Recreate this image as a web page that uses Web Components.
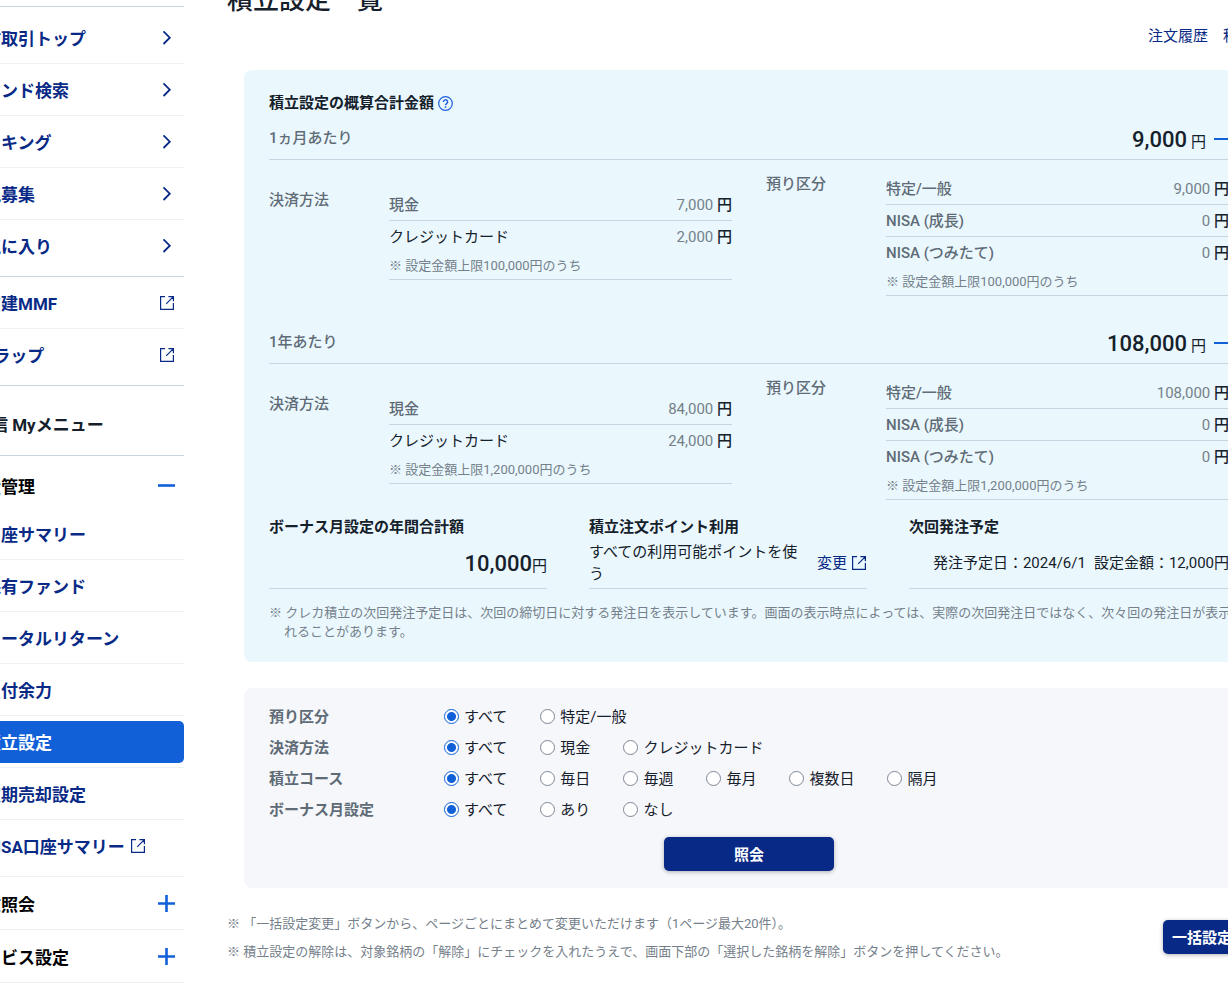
<!DOCTYPE html>
<html lang="ja">
<head>
<meta charset="utf-8">
<meta name="viewport" content="width=device-width, initial-scale=1">
<title>積立設定一覧</title>
<style>
    :root {
        --ink: #15202b;
        --muted: #5f6b76;
        --note: #75808a;
        --navy: #082a86;
        --blue: #1160d8;
        --line: #c9d4e2;
        --line-light: #edf2f7;
    }
    html {
        overflow: hidden;
    }
    body {
        margin: 0;
        background: #fff;
        color: var(--ink);
        font: 400 15px/22px Roboto, "Noto Sans CJK JP", sans-serif;
    }
</style>
</head>
<body>
<fund-app></fund-app>

<script>
const ICONS = {
    chevron: '<svg width="10" height="14" viewBox="0 0 10 14" fill="none" stroke="currentColor" stroke-width="1.8"><path d="M1.5 .4L7.8 6.7 1.5 13"/></svg>',
    external: '<svg width="16" height="16" viewBox="0 0 16 16" fill="none" stroke="currentColor" stroke-width="1.2"><path d="M6 1.6H1.6v12.8h12.8V8M9.4 1.6h5v4.6M14.4 1.6L7.2 8.8"/></svg>',
    minus: '<svg width="17" height="17" viewBox="0 0 17 17" fill="none" stroke="#1160d8" stroke-width="2.6"><path d="M0 8.5h17"/></svg>',
    plus: '<svg width="17" height="17" viewBox="0 0 17 17" fill="none" stroke="#1160d8" stroke-width="2.6"><path d="M0 8.5h17M8.5 0v17"/></svg>',
    help: '<svg width="15" height="15" viewBox="0 0 15 15" fill="none" stroke="#1f5fe0" stroke-width="1.2"><circle cx="7.5" cy="7.5" r="6.8"/><path d="M5.4 6a2.1 2.1 0 1 1 3.2 1.7c-.8.5-1.1.8-1.1 1.6" stroke-width="1.5"/><path d="M7.5 10.4v1.5" stroke-width="1.6"/></svg>'
};

class UiIcon extends HTMLElement {
    connectedCallback() {
        this.attachShadow({ mode: 'open' });
        this.shadowRoot.innerHTML = `
            <style>
                :host { display: inline-flex; flex: none; }
                svg { display: block; }
            </style>
            ${ICONS[this.getAttribute('name')]}
        `;
    }
}

// One row of the side menu
class MenuItem extends HTMLElement {
    connectedCallback() {
        const icon = this.getAttribute('icon');
        this.attachShadow({ mode: 'open' });
        this.shadowRoot.innerHTML = `
            <style>
                :host {
                    display: block;
                    border-bottom: 1px solid var(--line-light);
                    font-size: 17px;
                    font-weight: 700;
                }
                :host([last]) {
                    border-bottom: 0;
                }
                a {
                    display: flex;
                    align-items: center;
                    justify-content: space-between;
                    height: 51px;
                    padding: 0 9px 0 16px;
                    color: var(--navy);
                    text-decoration: none;
                }
                span {
                    padding-top: 2px;
                }
                :host([sub]) a {
                    justify-content: flex-start;
                    gap: 5px;
                    padding-left: 33px;
                }
                :host([active]) {
                    padding: 5px 0 4px;
                }
                :host([active]) a {
                    height: 42px;
                    border-radius: 5px;
                    background: var(--blue);
                    color: #fff;
                }
                .chevron {
                    margin-right: 3px;
                }
            </style>
            <a href="#">
                <span><slot></slot></span>
                ${icon ? `<ui-icon name="${icon}" class="${icon}"></ui-icon>` : ''}
            </a>
        `;
    }
}

// Heading that opens and closes a group of the menu
class MenuToggle extends HTMLElement {
    connectedCallback() {
        this.attachShadow({ mode: 'open' });
        this.shadowRoot.innerHTML = `
            <style>
                :host {
                    display: block;
                    border-bottom: 1px solid var(--line-light);
                }
                :host([open]) {
                    border-bottom: 0;
                }
                button {
                    display: flex;
                    align-items: center;
                    justify-content: space-between;
                    width: 100%;
                    height: 52px;
                    padding: 4px 9px 0 16px;
                    border: 0;
                    background: none;
                    color: #000;
                    font: inherit;
                    font-size: 17px;
                    font-weight: 700;
                }
                ui-icon {
                    padding-bottom: 4px;
                }
                :host([open]) button {
                    padding-top: 10px;
                }
            </style>
            <button type="button" aria-expanded="${this.hasAttribute('open')}">
                <slot></slot>
                <ui-icon name="${this.hasAttribute('open') ? 'minus' : 'plus'}"></ui-icon>
            </button>
        `;
    }
}

class SideMenu extends HTMLElement {
    connectedCallback() {
        this.attachShadow({ mode: 'open' });
        this.shadowRoot.innerHTML = `
            <style>
                :host { display: block; }
                .group {
                    border-bottom: 1px solid var(--line);
                    padding-bottom: 5px;
                }
                .first {
                    border-top: 1px solid var(--line);
                    padding-top: 5px;
                }
                .sub {
                    border-bottom-color: var(--line-light);
                }
                h2 {
                    margin: 0;
                    padding: 28px 0 18px 23px;
                    border-bottom: 1px solid var(--line);
                    font-size: 17px;
                    line-height: 23px;
                    font-weight: 700;
                }
            </style>
            <nav>
                <div class="group first">
                    <menu-item icon="chevron">投信取引トップ</menu-item>
                    <menu-item icon="chevron">ファンド検索</menu-item>
                    <menu-item icon="chevron">ランキング</menu-item>
                    <menu-item icon="chevron">新規募集</menu-item>
                    <menu-item icon="chevron" last>お気に入り</menu-item>
                </div>
                <div class="group">
                    <menu-item icon="external">外貨建MMF</menu-item>
                    <menu-item icon="external" last>SBIラップ</menu-item>
                </div>
                <h2>投信 Myメニュー</h2>
                <menu-toggle open>資産管理</menu-toggle>
                <div class="group sub">
                    <menu-item sub>口座サマリー</menu-item>
                    <menu-item sub>保有ファンド</menu-item>
                    <menu-item sub>トータルリターン</menu-item>
                    <menu-item sub>買付余力</menu-item>
                    <menu-item sub active>積立設定</menu-item>
                    <menu-item sub>定期売却設定</menu-item>
                    <menu-item sub icon="external" last>NISA口座サマリー</menu-item>
                </div>
                <menu-toggle>注文照会</menu-toggle>
                <menu-toggle>サービス設定</menu-toggle>
            </nav>
        `;
    }
}

// Table of amounts; rows are written as "label=amount" separated by "|"
class BreakdownTable extends HTMLElement {
    connectedCallback() {
        const rows = this.getAttribute('rows').split('|').map((row) => row.split('='));
        const plain = this.getAttribute('plain');
        this.attachShadow({ mode: 'open' });
        this.shadowRoot.innerHTML = `
            <style>
                :host {
                    display: grid;
                    grid-template-columns: 120px 1fr;
                    align-items: start;
                }
                h4 {
                    margin: 0;
                    color: var(--muted);
                    font-size: 15px;
                    font-weight: 500;
                }
                table {
                    width: 100%;
                    border-collapse: collapse;
                    border-bottom: 1px solid var(--line);
                }
                th, td {
                    height: 31px;
                    padding: 0;
                    text-align: right;
                    font-weight: 500;
                }
                th {
                    color: var(--muted);
                    text-align: left;
                }
                th.plain {
                    color: var(--ink);
                    font-weight: 400;
                }
                tr + tr:not(.limit) > * {
                    border-top: 1px solid var(--line);
                }
                td span {
                    color: var(--note);
                    font-weight: 400;
                }
                .limit td {
                    height: 27px;
                    color: var(--note);
                    font-size: 13px;
                    font-weight: 400;
                    line-height: 19px;
                    text-align: left;
                }
            </style>
            <h4>${this.getAttribute('heading')}</h4>
            <table>
                ${rows.map(([label, amount]) => `
                    <tr>
                        <th scope="row" class="${label === plain ? 'plain' : ''}">${label}</th>
                        <td><span>${amount}</span> 円</td>
                    </tr>`).join('')}
                <tr class="limit"><td colspan="2">※ ${this.getAttribute('limit')}</td></tr>
            </table>
        `;
    }
}

// Total for a period, with its breakdown tables in the slot
class PeriodTotal extends HTMLElement {
    connectedCallback() {
        this.attachShadow({ mode: 'open' });
        this.shadowRoot.innerHTML = `
            <style>
                :host {
                    display: block;
                    height: 204px;
                }
                header {
                    display: flex;
                    justify-content: space-between;
                    align-items: flex-start;
                    height: 32px;
                    border-bottom: 1px solid var(--line);
                }
                h3 {
                    margin: 0;
                    color: var(--muted);
                    font-size: 15px;
                    font-weight: 500;
                }
                .amount {
                    display: flex;
                    align-items: center;
                }
                strong {
                    margin-right: 4px;
                    font-size: 22px;
                    line-height: 26px;
                    font-weight: 500;
                }
                .unit {
                    padding-top: 3px;
                }
                button {
                    width: 15px;
                    height: 2px;
                    margin: 0 0 2px 8px;
                    padding: 0;
                    border: 0;
                    background: var(--blue);
                }
                .columns {
                    display: grid;
                    grid-template-columns: 1fr 1fr;
                    gap: 34px;
                    padding-top: 13px;
                }
                ::slotted(:first-child) {
                    padding-top: 16px;
                }
            </style>
            <header>
                <h3>${this.getAttribute('label')}</h3>
                <div class="amount">
                    <strong>${this.getAttribute('amount')}</strong><span class="unit">円</span>
                    <button type="button" aria-label="閉じる"></button>
                </div>
            </header>
            <div class="columns"><slot></slot></div>
        `;
    }
}

class SummaryCell extends HTMLElement {
    connectedCallback() {
        this.attachShadow({ mode: 'open' });
        this.shadowRoot.innerHTML = `
            <style>
                :host {
                    display: block;
                    border-bottom: 1px solid var(--line);
                }
                h3 {
                    margin: 0;
                    font-size: 15px;
                    font-weight: 700;
                }
                div {
                    display: flex;
                    align-items: center;
                    justify-content: flex-end;
                    height: 50px;
                }
            </style>
            <h3>${this.getAttribute('heading')}</h3>
            <div><slot></slot></div>
        `;
    }
}

class SummaryPanel extends HTMLElement {
    connectedCallback() {
        this.attachShadow({ mode: 'open' });
        this.shadowRoot.innerHTML = `
            <style>
                :host {
                    display: block;
                    padding: 22px 25px 21px;
                    border-radius: 8px;
                    background: #eaf8fe;
                }
                h2 {
                    display: flex;
                    align-items: center;
                    gap: 4px;
                    margin: 0 0 13px;
                    font-size: 15px;
                    font-weight: 700;
                }
                .cells {
                    display: grid;
                    grid-template-columns: 278fr 278fr 320fr;
                    gap: 42px;
                    margin-top: -19px;
                }
                .total {
                    padding-top: 2px;
                    font-size: 22px;
                    font-weight: 500;
                }
                .unit {
                    padding-top: 5px;
                }
                .points {
                    flex: 1;
                }
                a {
                    display: flex;
                    align-items: center;
                    gap: 4px;
                    margin-left: 12px;
                    color: var(--navy);
                    text-decoration: none;
                }
                .date {
                    margin-right: 8px;
                }
                .note {
                    margin: 14px 0 0;
                    padding-left: 15px;
                    color: var(--note);
                    font-size: 13px;
                    line-height: 19px;
                    text-indent: -15px;
                    white-space: nowrap;
                }
            </style>
            <h2>積立設定の概算合計金額<ui-icon name="help"></ui-icon></h2>
            <period-total label="1ヵ月あたり" amount="9,000">
                <breakdown-table heading="決済方法" plain="クレジットカード"
                    rows="現金=7,000|クレジットカード=2,000" limit="設定金額上限100,000円のうち"></breakdown-table>
                <breakdown-table heading="預り区分"
                    rows="特定/一般=9,000|NISA (成長)=0|NISA (つみたて)=0" limit="設定金額上限100,000円のうち"></breakdown-table>
            </period-total>
            <period-total label="1年あたり" amount="108,000">
                <breakdown-table heading="決済方法" plain="クレジットカード"
                    rows="現金=84,000|クレジットカード=24,000" limit="設定金額上限1,200,000円のうち"></breakdown-table>
                <breakdown-table heading="預り区分"
                    rows="特定/一般=108,000|NISA (成長)=0|NISA (つみたて)=0" limit="設定金額上限1,200,000円のうち"></breakdown-table>
            </period-total>
            <div class="cells">
                <summary-cell heading="ボーナス月設定の年間合計額">
                    <span class="total">10,000</span><span class="unit">円</span>
                </summary-cell>
                <summary-cell heading="積立注文ポイント利用">
                    <span class="points">すべての利用可能ポイントを使う</span>
                    <a href="#">変更<ui-icon name="external"></ui-icon></a>
                </summary-cell>
                <summary-cell heading="次回発注予定">
                    <span class="date">発注予定日：2024/6/1</span><span>設定金額：12,000円</span>
                </summary-cell>
            </div>
            <p class="note">※ クレカ積立の次回発注予定日は、次回の締切日に対する発注日を表示しています。画面の表示時点によっては、実際の次回発注日ではなく、次々回の発注日が表示さ<br>れることがあります。</p>
        `;
    }
}

class FilterRow extends HTMLElement {
    connectedCallback() {
        const name = this.getAttribute('name');
        const options = this.getAttribute('options').split(',');
        this.attachShadow({ mode: 'open' });
        this.shadowRoot.innerHTML = `
            <style>
                :host { display: block; }
                .row {
                    display: grid;
                    grid-template-columns: 175px 1fr;
                    align-items: center;
                    height: 31px;
                }
                .name {
                    color: var(--muted);
                    font-weight: 700;
                }
                .options {
                    display: flex;
                    gap: 33px;
                }
                label {
                    display: flex;
                    align-items: center;
                    gap: 5px;
                }
                input {
                    appearance: none;
                    box-sizing: border-box;
                    width: 15px;
                    height: 15px;
                    margin: 0;
                    border: 1px solid #7d8796;
                    border-radius: 50%;
                    background: #fff;
                }
                input:checked {
                    border: 1px solid var(--blue);
                    background: radial-gradient(circle, var(--blue) 4px, #fff 5px);
                }
            </style>
            <div class="row" role="radiogroup" aria-labelledby="name">
                <span class="name" id="name">${this.getAttribute('label')}</span>
                <div class="options">
                    ${options.map((option, i) => `<label><input type="radio" name="${name}"${i ? '' : ' checked'}>${option}</label>`).join('')}
                </div>
            </div>
        `;
    }
}

class PrimaryButton extends HTMLElement {
    connectedCallback() {
        this.attachShadow({ mode: 'open' });
        this.shadowRoot.innerHTML = `
            <style>
                :host { display: block; flex: none; }
                button {
                    width: 100%;
                    height: 34px;
                    padding: 1px 9px 0;
                    border: 0;
                    border-radius: 5px;
                    background: var(--navy);
                    box-shadow: 0 1px 4px rgba(0, 0, 0, 0.3);
                    color: #fff;
                    font: inherit;
                    font-weight: 700;
                }
            </style>
            <button type="button"><slot></slot></button>
        `;
    }
}

class FilterPanel extends HTMLElement {
    connectedCallback() {
        this.attachShadow({ mode: 'open' });
        this.shadowRoot.innerHTML = `
            <style>
                :host {
                    display: block;
                    padding: 13px 25px 17px;
                    border-radius: 8px;
                    background: #f5f7fb;
                }
                primary-button {
                    width: 170px;
                    margin: 12px auto 0;
                }
            </style>
            <filter-row name="account" label="預り区分" options="すべて,特定/一般"></filter-row>
            <filter-row name="payment" label="決済方法" options="すべて,現金,クレジットカード"></filter-row>
            <filter-row name="course" label="積立コース" options="すべて,毎日,毎週,毎月,複数日,隔月"></filter-row>
            <filter-row name="bonus" label="ボーナス月設定" options="すべて,あり,なし"></filter-row>
            <primary-button>照会</primary-button>
        `;
    }
}

class FundApp extends HTMLElement {
    connectedCallback() {
        this.attachShadow({ mode: 'open' });
        this.shadowRoot.innerHTML = `
            <style>
                :host {
                    display: grid;
                    grid-template-columns: 233px 1fr;
                    gap: 43px;
                    margin: 0 -43px 0 -49px;
                }
                side-menu {
                    padding-top: 6px;
                }
                main {
                    min-width: 0;
                }
                h1 {
                    margin: -17px 0 0;
                    font-size: 26px;
                    line-height: 34px;
                    font-weight: 500;
                }
                .links {
                    display: flex;
                    justify-content: flex-end;
                    gap: 15px;
                    margin: 8px 0 23px;
                    padding-right: 18px;
                }
                .links a {
                    color: var(--navy);
                    text-decoration: none;
                }
                summary-panel, filter-panel {
                    margin: 0 17px 26px;
                }
                .bottom {
                    display: flex;
                    justify-content: space-between;
                    align-items: flex-start;
                }
                .notes p {
                    margin: 0 0 9px;
                    color: var(--note);
                    font-size: 13px;
                    line-height: 19px;
                }
                primary-button {
                    padding-top: 6px;
                }
            </style>
            <side-menu></side-menu>
            <main>
                <h1>積立設定一覧</h1>
                <div class="links">
                    <a href="#">注文履歴</a>
                    <a href="#">積立</a>
                </div>
                <summary-panel></summary-panel>
                <filter-panel></filter-panel>
                <div class="bottom">
                    <div class="notes">
                        <p>※ 「一括設定変更」ボタンから、ページごとにまとめて変更いただけます（1ページ最大20件）。</p>
                        <p>※ 積立設定の解除は、対象銘柄の「解除」にチェックを入れたうえで、画面下部の「選択した銘柄を解除」ボタンを押してください。</p>
                    </div>
                    <primary-button>一括設定変更</primary-button>
                </div>
            </main>
        `;
    }
}

customElements.define('ui-icon', UiIcon);
customElements.define('menu-item', MenuItem);
customElements.define('menu-toggle', MenuToggle);
customElements.define('side-menu', SideMenu);
customElements.define('breakdown-table', BreakdownTable);
customElements.define('period-total', PeriodTotal);
customElements.define('summary-cell', SummaryCell);
customElements.define('summary-panel', SummaryPanel);
customElements.define('filter-row', FilterRow);
customElements.define('primary-button', PrimaryButton);
customElements.define('filter-panel', FilterPanel);
customElements.define('fund-app', FundApp);
</script>
</body>
</html>
